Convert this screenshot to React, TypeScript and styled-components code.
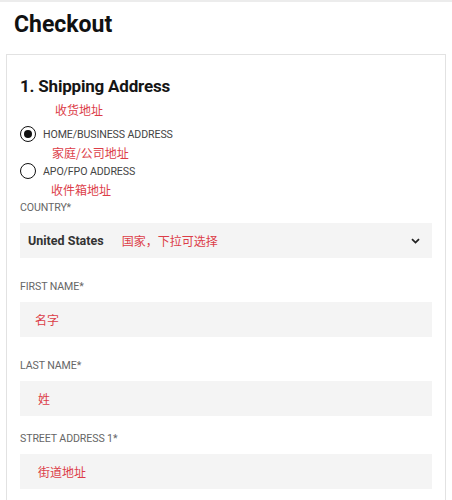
import React, { useState } from "react";
import styled, { createGlobalStyle } from "styled-components";

const GlobalStyle = createGlobalStyle`
  html, body {
    margin: 0;
    padding: 0;
    background: #ffffff;
    font-family: Roboto, "Noto Sans CJK SC", sans-serif;
  }
  * {
    box-sizing: border-box;
  }
`;

const TopBar = styled.div`
  height: 2px;
  background: #ececec;
`;

const Page = styled.div`
  padding: 9px 6px 0 6px;
`;

const Title = styled.h1`
  margin: 0 0 15px 8px;
  font-size: 23px;
  line-height: 28px;
  font-weight: 700;
  color: #111111;
`;

const Card = styled.div`
  border: 1px solid #e2e2e2;
  border-bottom: none;
  padding: 20px 13px 30px 13px;
`;

const SectionTitle = styled.h2`
  margin: 0 0 4px 0;
  font-size: 17px;
  line-height: 22px;
  font-weight: 700;
  letter-spacing: -0.2px;
  color: #151515;
`;

const Note = styled.div<{ $indent: number }>`
  padding-left: ${(p) => p.$indent}px;
  font-family: "Noto Sans CJK SC", sans-serif;
  font-size: 12px;
  line-height: 17px;
  color: #dc3d48;
`;

const RadioGroup = styled.div`
  display: flex;
  flex-direction: column;
  margin-top: 6px;
`;

const RadioRow = styled.label`
  display: flex;
  align-items: center;
  gap: 7px;
  height: 20px;
  cursor: pointer;
`;

const RadioCircle = styled.span<{ $checked: boolean }>`
  width: 16px;
  height: 16px;
  border-radius: 50%;
  border: 1.7px solid #111111;
  display: flex;
  align-items: center;
  justify-content: center;
  flex-shrink: 0;
  &::after {
    content: "";
    width: 8px;
    height: 8px;
    border-radius: 50%;
    background: #111111;
    display: ${(p) => (p.$checked ? "block" : "none")};
  }
`;

const RadioText = styled.span`
  font-size: 10.6px;
  color: #444444;
  letter-spacing: -0.1px;
`;

const Field = styled.div<{ $top: number }>`
  display: flex;
  flex-direction: column;
  margin-top: ${(p) => p.$top}px;
`;

const Label = styled.div`
  font-size: 10.6px;
  line-height: 14px;
  color: #666666;
  margin-bottom: 8px;
  letter-spacing: -0.1px;
`;

const Box = styled.div`
  height: 35px;
  background: #f4f4f4;
  display: flex;
  align-items: center;
  padding: 0 8px;
`;

const SelectValue = styled.span`
  font-size: 12.5px;
  font-weight: 700;
  color: #333333;
  margin-right: 18px;
`;

const BoxNote = styled.span<{ $indent: number }>`
  padding-left: ${(p) => p.$indent}px;
  font-family: "Noto Sans CJK SC", sans-serif;
  font-size: 12px;
  color: #dc3d48;
  flex: 1;
`;

const Chevron = styled.svg`
  width: 9px;
  height: 6px;
  margin-right: 4px;
`;

const App = () => {
  const [kind, setKind] = useState("home");

  return (
    <>
      <GlobalStyle />
      <TopBar />
      <Page>
        <Title>Checkout</Title>
        <Card>
          <SectionTitle>1. Shipping Address</SectionTitle>
          <Note $indent={35}>收货地址</Note>
          <RadioGroup>
            <RadioRow onClick={() => setKind("home")}>
              <RadioCircle $checked={kind === "home"} />
              <RadioText>HOME/BUSINESS ADDRESS</RadioText>
            </RadioRow>
            <Note $indent={32}>家庭/公司地址</Note>
            <RadioRow onClick={() => setKind("apo")}>
              <RadioCircle $checked={kind === "apo"} />
              <RadioText>APO/FPO ADDRESS</RadioText>
            </RadioRow>
            <Note $indent={31}>收件箱地址</Note>
          </RadioGroup>

          <Field $top={3}>
            <Label>COUNTRY*</Label>
            <Box>
              <SelectValue>United States</SelectValue>
              <BoxNote $indent={0}>国家，下拉可选择</BoxNote>
              <Chevron viewBox="0 0 9 6">
                <path d="M1 1.2 L4.5 4.6 L8 1.2" fill="none" stroke="#222" strokeWidth="1.8" />
              </Chevron>
            </Box>
          </Field>

          <Field $top={22}>
            <Label>FIRST NAME*</Label>
            <Box>
              <BoxNote $indent={7}>名字</BoxNote>
            </Box>
          </Field>

          <Field $top={22}>
            <Label>LAST NAME*</Label>
            <Box>
              <BoxNote $indent={10}>姓</BoxNote>
            </Box>
          </Field>

          <Field $top={16}>
            <Label>STREET ADDRESS 1*</Label>
            <Box>
              <BoxNote $indent={10}>街道地址</BoxNote>
            </Box>
          </Field>
        </Card>
      </Page>
    </>
  );
};

export default App;
